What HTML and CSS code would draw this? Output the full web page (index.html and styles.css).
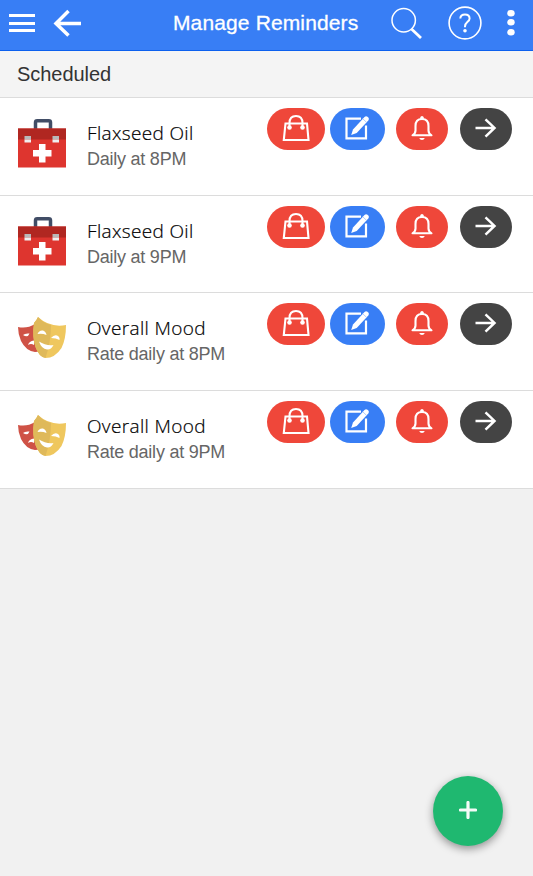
FILE: index.html
```html
<!DOCTYPE html>
<html lang="en">
<head>
    <meta charset="UTF-8">
    <meta name="viewport" content="width=device-width, initial-scale=1.0">
    <title>Manage Reminders</title>
    <link rel="stylesheet" href="styles.css">
</head>
<body>
    <svg class="sprite">
        <symbol id="kit" viewBox="0 0 50 50">
            <path d="M18.500 10V3.500Q18.500 1.800 20.200 1.800H31.800Q33.500 1.800 33.500 3.500V10" fill="none" stroke="#414d66" stroke-width="3.500"/>
            <rect x="1" y="9.500" width="48" height="39" fill="#de352f"/>
            <rect x="1" y="9.500" width="48" height="11" fill="#b02721"/>
            <path d="M7.500 17h6.500v3.500h-6.500zM35.500 17h6.500v3.500h-6.500z" fill="#b9b9b9"/>
            <path d="M7.500 20.500h6.500v3h-6.500zM35.500 20.500h6.500v3h-6.500z" fill="#f0f0f0"/>
            <path d="M22 25h6.500v6h6v6.500h-6v6h-6.500v-6h-6v-6.500h6z" fill="#fff"/>
        </symbol>
        <symbol id="masks" viewBox="0 0 50 50">
            <path d="M1 13Q10 15 18 10L28 18V34Q24 38 18 38Q9 37 4 27Q1 20 1 13z" fill="#cf5246"/>
            <path d="M6 21Q8 19 12.500 19.500Q11 24 6 21zM11 31Q12 27 17 26.500V31Q14 29 11 31z" fill="#fff"/>
            <path d="M21 3Q33 14 49 11Q49 25 44.500 34Q38 44 28.500 44Q22 43 18.500 33Q15 23 17 9Q19.500 6.500 21 3z" fill="#efc75e"/>
            <path d="M21 3Q26 9 34 11Q34 28 28.500 44Q22 43 18.500 33Q15 23 17 9Q19.500 6.500 21 3z" fill="#dfb95a"/>
            <path d="M20.500 20Q22 16 26 16.500Q29 17.500 29.500 21Q25 19 20.500 20zM34 24Q37 20.500 40 21.500Q43 22.500 42.500 26Q39 24 34 24zM22 27.500Q29 32 36.500 31Q34 36 30 35.500Q24.500 35 22 27.500z" fill="#fff"/>
        </symbol>
        <symbol id="bag" viewBox="0 0 58 42">
            <path d="M18.500 15.500H40L41.500 32H16.800z" stroke-width="2.100"/>
            <path d="M22.500 19V15Q22.500 8 29 8T35.500 15V19" stroke-width="2"/>
            <circle class="solid" cx="22.500" cy="19.500" r="2.300"/>
            <circle class="solid" cx="35.500" cy="19.500" r="2.300"/>
        </symbol>
        <symbol id="edit" viewBox="0 0 55 42">
            <path d="M31 10.700H16.500V30.300H36V17.500" stroke-width="2.200"/>
            <path class="solid" d="M21.200 27L23 21.500L34.500 9Q36 7.500 37.500 8.800L38.500 9.800Q39.500 11 38.300 12.500L26.700 25z"/>
            <path class="gap" d="M32.700 10.700L36.700 14.500"/>
        </symbol>
        <symbol id="bell" viewBox="0 0 52 42">
            <path d="M16.500 27.300Q19.500 25.500 19.500 22.500V18Q19.500 11 26 11T32.500 18V22.500Q32.500 25.500 35.500 27.300z" stroke-width="2.100" stroke-linejoin="round"/>
            <path class="solid" d="M24.200 11V9.500Q24.500 8 26 8T27.800 9.500V11zM23.200 30H28.800Q28 32 26 32T23.200 30z"/>
        </symbol>
        <symbol id="next" viewBox="0 0 52 42">
            <path d="M15.500 19.900H35M25.500 11.300L34.500 19.900L25.500 28.700" stroke-width="2.500"/>
        </symbol>
    </svg>

    <header class="bar">
        <svg class="menu-icon" width="26" height="20" viewBox="0 0 26 20">
            <path d="M0 2.500h26M0 10.500h26M0 17.500h26" stroke="#fff" stroke-width="3"/>
        </svg>
        <svg class="back-icon" width="28" height="28" viewBox="0 0 28 28">
            <path d="M15.500 2L3 14.500l12.500 12M3 14.500h25" fill="none" stroke="#fff" stroke-width="3.500"/>
        </svg>
        <h1>Manage Reminders</h1>
        <svg class="search-icon" width="32" height="32" viewBox="0 0 32 32">
            <circle cx="12.700" cy="13.200" r="11.700" fill="none" stroke="#fff" stroke-width="1.500"/>
            <path d="M20.500 22l9.500 9" stroke="#fff" stroke-width="2.800"/>
        </svg>
        <svg class="help-icon" width="34" height="34" viewBox="0 0 34 34">
            <circle cx="17" cy="17" r="15.900" fill="none" stroke="#fff" stroke-width="1.600"/>
            <path d="M12.300 12.500Q12.500 8.600 17 8.600T21.600 12.500C21.600 15.800 17 16 17 20.500V21.300" fill="none" stroke="#fff" stroke-width="2"/>
            <circle cx="17" cy="24.700" r="1.800" fill="#fff"/>
        </svg>
        <svg class="more-icon" width="8" height="26" viewBox="0 0 8 26">
            <g fill="#fff"><ellipse cx="4" cy="3.200" rx="3.700" ry="3.200"/><ellipse cx="4" cy="12.300" rx="3.700" ry="3.200"/><ellipse cx="4" cy="22.300" rx="3.700" ry="3.200"/></g>
        </svg>
    </header>

    <h2 class="divider">Scheduled</h2>

    <main id="reminder-list"></main>

    <button class="fab" aria-label="Add">
        <svg width="18" height="18" viewBox="0 0 18 18">
            <path d="M9 1.500v15M1.500 9h15" stroke="#f4fbf7" stroke-width="3.200" stroke-linecap="round"/>
        </svg>
    </button>

    <script>
        const reminders = [
            { name: "Flaxseed Oil", when: "Daily at 8PM", icon: "kit" },
            { name: "Flaxseed Oil", when: "Daily at 9PM", icon: "kit" },
            { name: "Overall Mood", when: "Rate daily at 8PM", icon: "masks" },
            { name: "Overall Mood", when: "Rate daily at 9PM", icon: "masks" },
        ];
        const actions = ["bag", "edit", "bell", "next"];

        const list = document.getElementById("reminder-list");

        reminders.forEach(reminder => {
            const row = document.createElement("div");
            row.classList.add("item");
            row.innerHTML = `
                <svg class="thumb"><use href="#${reminder.icon}"/></svg>
                <div class="details">
                    <h3>${reminder.name}</h3>
                    <p>${reminder.when}</p>
                </div>
                <div class="actions">
                    ${actions.map(a => `<button class="pill ${a}" aria-label="${a}"><svg><use href="#${a}"/></svg></button>`).join("")}
                </div>
            `;
            list.appendChild(row);
        });
    </script>
</body>
</html>
```

FILE: styles.css
```css
* {
    box-sizing: border-box;
}
body {
    margin: 0;
    min-height: 100vh;
    background-color: #f1f1f1;
    font-family: "Liberation Sans", Arial, sans-serif;
}
h1, h2, h3, p {
    margin: 0;
    font-weight: normal;
    white-space: nowrap;
}
button {
    border: none;
    padding: 0;
    cursor: pointer;
}
svg {
    display: block;
    flex: none;
}
.sprite {
    display: none;
}
.bar {
    display: flex;
    align-items: center;
    height: 51px;
    padding: 0 18px 5px 9px;
    background-color: #387ef5;
    border-bottom: 1px solid #0c60ee;
    color: white;
}
.back-icon {
    margin-left: 18px;
}
.bar h1 {
    width: 186px;
    margin-left: 92px;
    font-size: 21px;
    letter-spacing: 0.13px;
    line-height: 45px;
    -webkit-text-stroke: 0.3px white;
}
.search-icon {
    margin-left: 32px;
}
.help-icon {
    margin-left: 25px;
}
.more-icon {
    margin-left: auto;
}
.divider {
    height: 47px;
    padding-left: 17px;
    background-color: #f4f4f4;
    border-bottom: 1px solid #dcdcdc;
    color: #333;
    font-size: 20px;
    letter-spacing: -0.05px;
    line-height: 46px;
}
.item {
    display: flex;
    height: 97.7px;
    padding: 0 21px 0 17px;
    background-color: white;
    border-bottom: 1px solid #dcdcdc;
}
.thumb {
    width: 50px;
    height: 50px;
    margin-top: 21px;
}
.details {
    margin: 22px 0 0 20px;
}
.details h3 {
    color: #000;
    font-family: "Open Sans", sans-serif;
    font-size: 19px;
    font-weight: 300;
    letter-spacing: 0.35px;
    line-height: 27px;
    -webkit-text-stroke: 0.2px #000;
}
.details p {
    color: #666;
    font-size: 18px;
    letter-spacing: -0.24px;
    line-height: 25px;
}
.actions {
    display: flex;
    margin: 10px 0 0 auto;
}
.pill {
    width: 52px;
    height: 42px;
    border-radius: 21px;
    background-color: #ef473a;
}
.pill svg {
    width: 100%;
    height: 100%;
    fill: none;
    stroke: white;
}
.solid {
    fill: white;
    stroke: none;
}
.gap {
    stroke: #9fc1fa;
    stroke-width: 0.8px;
}
.bag {
    width: 58px;
    margin-right: 5px;
}
.edit {
    width: 55px;
    margin-right: 11px;
    background-color: #387ef5;
}
.bell {
    margin-right: 12px;
}
.next {
    background-color: #444;
}
.fab {
    position: fixed;
    right: 30px;
    bottom: 30px;
    display: flex;
    align-items: center;
    justify-content: center;
    width: 70px;
    height: 70px;
    padding-bottom: 3px;
    border-radius: 50%;
    background-color: #1fb870;
    box-shadow: 0 3px 8px rgba(0, 0, 0, 0.4);
}
```
